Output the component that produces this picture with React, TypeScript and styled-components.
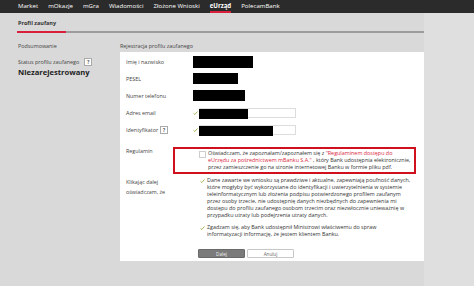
import React from 'react';
import styled, { createGlobalStyle } from 'styled-components';

const GlobalStyle = createGlobalStyle`
  body {
    margin: 0;
    background: #dfdfdf;
    font-family: "Open Sans", "DejaVu Sans", sans-serif;
    color: #333333;
  }
`;

interface navItem {
  label: string;
  active?: boolean;
}

const NAV: navItem[] = [
  { label: 'Market' },
  { label: 'mOkazje' },
  { label: 'mGra' },
  { label: 'Wiadomości' },
  { label: 'Złożone Wnioski' },
  { label: 'eUrząd', active: true },
  { label: 'PolecamBank' },
];

const Check: React.FC = () => (
  <CheckIcon viewBox="0 0 10 8">
    <path d="M1 4.5 L3.6 7 L9 1" fill="none" stroke="#8ea12b" strokeWidth="1.6" />
  </CheckIcon>
);

const App: React.FC = () => {
  return (
    <>
      <GlobalStyle />
      <TopBar>
        {NAV.map((item) => (
          <NavItem key={item.label} $active={item.active}>
            {item.label}
          </NavItem>
        ))}
      </TopBar>
      <Main>
        <Tabs>
          <Tab>Profil zaufany</Tab>
          <TabFiller />
        </Tabs>
        <Columns>
          <Side>
            <SectionTitle>Podsumowanie</SectionTitle>
            <StatusLabel>
              Status profilu zaufanego <Help>?</Help>
            </StatusLabel>
            <StatusValue>Niezarejestrowany</StatusValue>
          </Side>
          <Content>
            <SectionTitle>Rejestracja profilu zaufanego</SectionTitle>
            <Panel>
              <FieldRow>
                <Label>Imię i nazwisko</Label>
                <Redacted $w={60} $h={12} />
              </FieldRow>
              <FieldRow>
                <Label>PESEL</Label>
                <Redacted $w={45} $h={11} />
              </FieldRow>
              <FieldRow>
                <Label>Numer telefonu</Label>
                <Redacted $w={52} $h={11} />
              </FieldRow>
              <FieldRow>
                <Label>Adres email</Label>
                <Value>
                  <Check />
                  <InputBox>
                    <Redacted $w={49} $h={10} />
                  </InputBox>
                </Value>
              </FieldRow>
              <FieldRow>
                <Label>
                  Identyfikator <Help>?</Help>
                </Label>
                <Value>
                  <Check />
                  <InputBox>
                    <Redacted $w={74} $h={10} />
                  </InputBox>
                </Value>
              </FieldRow>

              <BlockRow $top={9}>
                <Label>Regulamin</Label>
                <TermsBox>
                  <CheckBox />
                  <Text>
                    Oświadczam, że zapoznałam/zapoznałem się z{' '}
                    <Link>"Regulaminem dostępu do</Link>
                    <br />
                    <Link>eUrzędu za pośrednictwem mBanku S.A."</Link> , który Bank udostępnia elektronicznie,
                    <br />
                    przez zamieszczenie go na stronie internetowej Banku w formie pliku pdf.
                  </Text>
                </TermsBox>
              </BlockRow>

              <BlockRow $top={3}>
                <SideLabel>
                  Klikając dalej
                  <br />
                  oświadczam, że
                </SideLabel>
                <Statements>
                  <Statement>
                    <Check />
                    <Text>
                      Dane zawarte we wniosku są prawdziwe i aktualne, zapewniają poufność danych,
                      <br />
                      które mogłyby być wykorzystane do identyfikacji i uwierzytelnienia w systemie
                      <br />
                      teleinformatycznym lub złożenia podpisu potwierdzonego profilem zaufanym
                      <br />
                      przez osoby trzecie, nie udostępnię danych niezbędnych do zapewnienia mi
                      <br />
                      dostępu do profilu zaufanego osobom trzecim oraz niezwłocznie unieważnię w
                      <br />
                      przypadku utraty lub podejrzenia utraty danych.
                    </Text>
                  </Statement>
                  <Statement>
                    <Check />
                    <Text>
                      Zgadzam się, aby Bank udostępnił Ministrowi właściwemu do spraw
                      <br />
                      informatyzacji informację, że jestem klientem Banku.
                    </Text>
                  </Statement>
                </Statements>
              </BlockRow>

              <Buttons>
                <Button $primary>Dalej</Button>
                <Button>Anuluj</Button>
              </Buttons>
            </Panel>
          </Content>
        </Columns>
      </Main>
    </>
  );
};

export default App;

const TopBar = styled.div`
  height: 13px;
  background: #2b2b2b;
  display: flex;
  align-items: stretch;
  gap: 10px;
  padding-left: 18px;
`;

const NavItem = styled.div<{ $active?: boolean }>`
  font-size: 6.1px;
  color: #ffffff;
  font-weight: ${(p) => (p.$active ? 700 : 400)};
  box-sizing: border-box;
  border-bottom: 2px solid ${(p) => (p.$active ? '#d81f3c' : 'transparent')};
  line-height: 12px;
`;

const Main = styled.div`
  width: 424px;
  min-height: 273px;
  background: #d9d9d9;
`;

const Tabs = styled.div`
  display: flex;
  align-items: flex-end;
  height: 20px;
  padding-left: 17px;
`;

const Tab = styled.div`
  width: 49px;
  box-sizing: border-box;
  padding-left: 1px;
  font-size: 5.5px;
  font-weight: 700;
  color: #333333;
  line-height: 8px;
  padding-bottom: 4px;
  border-bottom: 2px solid #d81f3c;
`;

const TabFiller = styled.div`
  flex: 1;
  border-bottom: 2px solid #9c9c9c;
`;

const Columns = styled.div`
  display: grid;
  grid-template-columns: 102px 304px;
  padding-left: 18px;
`;

const Side = styled.div`
  display: flex;
  flex-direction: column;
`;

const Content = styled.div`
  display: flex;
  flex-direction: column;
`;

const SectionTitle = styled.div`
  font-size: 5.4px;
  line-height: 8px;
  color: #444444;
  margin-top: 9px;
  margin-bottom: 2px;
`;

const StatusLabel = styled.div`
  font-size: 5.4px;
  line-height: 8px;
  color: #444444;
  margin-top: 6px;
  display: flex;
  align-items: center;
  gap: 3px;
`;

const StatusValue = styled.div`
  font-size: 7.6px;
  font-weight: 700;
  color: #222222;
  line-height: 10px;
  margin-top: 1px;
`;

const Help = styled.span`
  display: inline-flex;
  align-items: center;
  justify-content: center;
  width: 6px;
  height: 6px;
  border: 1px solid #aaaaaa;
  background: #ffffff;
  font-size: 4.5px;
  font-weight: 700;
  color: #555555;
  margin-left: 2px;
`;

const Panel = styled.div`
  background: #ffffff;
  height: 209px;
  box-sizing: border-box;
  padding: 1px 0 0 6px;
  display: flex;
  flex-direction: column;
`;

const FieldRow = styled.div`
  display: grid;
  grid-template-columns: 67px 1fr;
  align-items: center;
  height: 17px;
`;

const BlockRow = styled.div<{ $top: number }>`
  display: grid;
  grid-template-columns: 67px 1fr;
  align-items: start;
  margin-top: ${(p) => p.$top}px;
`;

const Label = styled.div`
  font-size: 5.4px;
  color: #444444;
  line-height: 8px;
  display: flex;
  align-items: center;
`;

const SideLabel = styled.div`
  font-size: 5.4px;
  color: #444444;
  line-height: 10px;
  margin-top: 0;
`;

const Value = styled.div`
  display: flex;
  align-items: center;
  gap: 1px;
`;

const Redacted = styled.div<{ $w: number; $h: number }>`
  width: ${(p) => p.$w}px;
  height: ${(p) => p.$h}px;
  background: #000000;
`;

const InputBox = styled.div`
  width: 97px;
  height: 10px;
  box-sizing: border-box;
  border: 1px solid #dddddd;
  border-left: none;
  display: flex;
  margin-top: 1px;
`;

const CheckIcon = styled.svg`
  width: 5px;
  height: 4px;
  flex-shrink: 0;
`;

const TermsBox = styled.div`
  margin-left: -20px;
  width: 243px;
  box-sizing: border-box;
  border: 2px solid #d0111d;
  padding: 1px 0 1px 24px;
  display: flex;
  align-items: flex-start;
  gap: 2px;
`;

const CheckBox = styled.div`
  width: 5px;
  height: 5px;
  border: 1px solid #cfcfcf;
  margin-top: 1px;
  flex-shrink: 0;
`;

const Text = styled.div`
  font-size: 5.4px;
  line-height: 7px;
  color: #333333;
  white-space: nowrap;
`;

const Link = styled.span`
  color: #d81f3c;
`;

const Statements = styled.div`
  display: flex;
  flex-direction: column;
  gap: 5px;
  padding-left: 7px;
`;

const Statement = styled.div`
  display: flex;
  align-items: flex-start;
  gap: 2px;

  svg {
    margin-top: 2px;
  }
`;

const Buttons = styled.div`
  display: flex;
  gap: 2px;
  padding-left: 72px;
  margin-top: 11px;
`;

const Button = styled.div<{ $primary?: boolean }>`
  width: 47px;
  height: 9px;
  box-sizing: border-box;
  display: flex;
  align-items: center;
  justify-content: center;
  font-size: 4.6px;
  border-radius: 1px;
  color: ${(p) => (p.$primary ? '#eeeeee' : '#666666')};
  background: ${(p) => (p.$primary ? '#7b7b7b' : '#ffffff')};
  border: 1px solid ${(p) => (p.$primary ? '#6a6a6a' : '#c8c8c8')};
`;
